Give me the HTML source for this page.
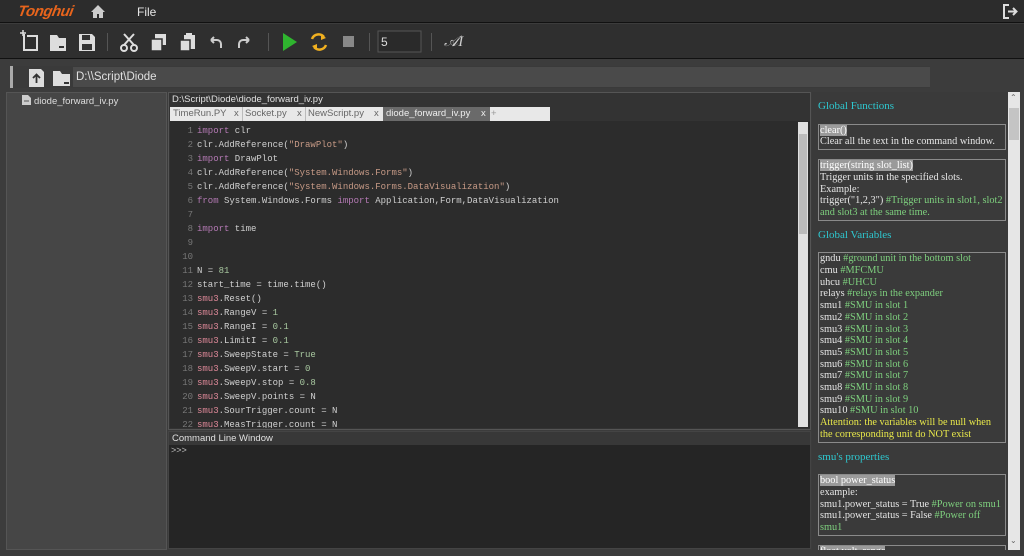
<!DOCTYPE html>
<html><head><meta charset="utf-8"><style>
*{margin:0;padding:0;box-sizing:border-box}
body{width:1024px;height:556px;background:#3c3c3c;font-family:"Liberation Sans",sans-serif;position:relative;overflow:hidden;color:#ddd}
.abs{position:absolute}
.code{font-family:"Liberation Mono",monospace;font-size:9px;line-height:14px;color:#d0d0d0;white-space:pre}
.ln{color:#777;display:inline-block;width:27px;text-align:right;padding-right:4px}
.k{color:#b57ab5}.s{color:#c79a86}.m{color:#e08a9a}.n{color:#a8c8a0}
.rp{font-family:"Liberation Serif",serif;font-size:10.3px;line-height:11.7px;color:#e6e6e6}
.h{color:#2ec8d0;font-size:11px;margin:7px 0 11px 6px}
.box{border:1px solid #8a8a8a;margin:0 2px 9px 6px;padding:0 1px 1px 1px}
.sel{background:#9a9a9a;color:#fff}
.g{color:#7ed07e}.y{color:#e8e84a}
.tab{position:absolute;top:108px;font-size:9.5px;color:#666}
</style></head><body>
<div class="abs" style="left:0;top:0;width:1024px;height:23px;background:#2c2c2c;border-bottom:1px solid #111"></div>
<div class="abs" style="left:18px;top:3px;font:italic bold 15px 'Liberation Sans';color:#e8641c;letter-spacing:-0.5px;transform:skewX(-10deg)">Tonghui</div>
<svg class="abs" style="left:90px;top:4px" width="16" height="15" viewBox="0 0 16 15"><path d="M8 1L1 8h2v6h4v-4h2v4h4V8h2z" fill="#ccc"/></svg>
<div class="abs" style="left:137px;top:5px;font-size:12px;color:#e6e6e6">File</div>
<svg class="abs" style="left:1002px;top:4px" width="16" height="15" viewBox="0 0 16 15"><path d="M7 1H2v13h5" fill="none" stroke="#ddd" stroke-width="2"/><path d="M6 7.5h8M11 4l3.5 3.5L11 11" fill="none" stroke="#ddd" stroke-width="2"/></svg>
<div class="abs" style="left:0;top:24px;width:1024px;height:35px;background:#2f2f2f;border-bottom:1px solid #111"></div>
<svg class="abs" style="left:18px;top:30px" width="450" height="24" viewBox="0 0 450 24">
<g fill="none" stroke="#ddd" stroke-width="2"><path d="M6 4v16h13V6H9"/><path d="M5 0v6M2 3h6" stroke-width="1.5"/></g>
<path d="M32 5h7l2 3h7v13H32z" fill="#ddd"/><rect x="41" y="16" width="5" height="2" fill="#333"/>
<path d="M61 4h13l3 3v14H61z" fill="#ddd"/><rect x="64" y="5" width="8" height="5" fill="#333"/><rect x="64" y="14" width="10" height="6" fill="#333"/>
<rect x="89" y="3" width="1" height="18" fill="#555"/>
<g stroke="#ddd" stroke-width="2" fill="none"><path d="M106 4l10 11M116 4l-10 11"/><circle cx="106" cy="18" r="3"/><circle cx="116" cy="18" r="3"/></g>
<rect x="137" y="4" width="11" height="11" fill="#ddd"/><rect x="133" y="9" width="11" height="12" fill="#ddd" stroke="#2f2f2f" stroke-width="1.5"/>
<rect x="166" y="5" width="11" height="14" fill="#ddd"/><rect x="162" y="10" width="10" height="11" fill="#ddd" stroke="#2f2f2f" stroke-width="1.5"/><rect x="168" y="3" width="6" height="3" fill="#ddd"/>
<path d="M193 10h6a4 4 0 0 1 4 4v4M193 10l3-3M193 10l3 3" stroke="#ccc" stroke-width="2" fill="none"/>
<path d="M231 10h-6a4 4 0 0 0-4 4v4M231 10l-3-3M231 10l-3 3" stroke="#ccc" stroke-width="2" fill="none"/>
<rect x="250" y="3" width="1" height="18" fill="#555"/>
<path d="M265 3l14 9-14 9z" fill="#2fb52f"/>
<g stroke="#f0b020" stroke-width="2.5" fill="none"><path d="M294 9a7 7 0 0 1 12-2"/><path d="M308 15a7 7 0 0 1-12 2"/></g><path d="M303 4l5 4-5 2z M299 20l-5-4 5-2z" fill="#f0b020"/>
<rect x="325" y="6" width="11" height="11" fill="#888"/>
<rect x="351" y="3" width="1" height="18" fill="#555"/>
<rect x="360" y="1" width="43" height="21" fill="#2a2a2a" stroke="#555"/>
<rect x="413" y="3" width="1" height="18" fill="#555"/>
</svg>
<div class="abs" style="left:381px;top:35px;font-size:12px;color:#ddd">5</div>
<div class="abs" style="left:444px;top:33px;font:italic 15px 'Liberation Serif';color:#ccc">𝒜I</div>
<div class="abs" style="left:10px;top:66px;width:920px;height:22px;background:#3a3a3a;border-left:3px solid #aaa"></div>
<div class="abs" style="left:73px;top:67px;width:857px;height:20px;background:#4a4a4a"></div>
<svg class="abs" style="left:28px;top:68px" width="45" height="19" viewBox="0 0 45 19"><path d="M1 1h12l3 3v15H1z" fill="#ddd"/><path d="M8.5 15V7M5 10l3.5-3.5L12 10" stroke="#333" stroke-width="1.8" fill="none"/><path d="M25 3h7l2 3h8v12H25z" fill="#ddd"/><rect x="36" y="14" width="5" height="2" fill="#333"/></svg>
<div class="abs" style="left:76px;top:71px;font-size:11.5px;color:#e0e0e0">D:\\Script\Diode</div>
<div class="abs" style="left:6px;top:92px;width:161px;height:458px;background:#464646;border:1px solid #555"></div>
<svg class="abs" style="left:22px;top:95px" width="9" height="10" viewBox="0 0 9 10"><path d="M0 0h6l3 3v7H0z" fill="#ccc"/><path d="M2 6h5" stroke="#555"/></svg>
<div class="abs" style="left:34px;top:96px;font-size:9.5px;color:#ddd">diode_forward_iv.py</div>
<div class="abs" style="left:168px;top:92px;width:643px;height:338px;background:#333;border:1px solid #555"></div>
<div class="abs" style="left:172px;top:94px;font-size:9.5px;color:#e0e0e0">D:\Script\Diode\diode_forward_iv.py</div>
<div class="abs" style="left:170px;top:107px;width:380px;height:14px;background:#e8e8e8"></div>
<div class="abs" style="left:383px;top:107px;width:107px;height:14px;background:#6a6a6a"></div>
<div class="tab" style="left:173px">TimeRun.PY</div><div class="tab" style="left:234px">x</div>
<div class="abs" style="left:242px;top:107px;width:1px;height:14px;background:#bbb"></div>
<div class="tab" style="left:245px">Socket.py</div><div class="tab" style="left:297px">x</div>
<div class="abs" style="left:305px;top:107px;width:1px;height:14px;background:#bbb"></div>
<div class="tab" style="left:308px">NewScript.py</div><div class="tab" style="left:374px">x</div>
<div class="tab" style="left:386px;color:#eee">diode_forward_iv.py</div><div class="tab" style="left:481px;color:#eee">x</div>
<div class="tab" style="left:491px;color:#999">+</div>
<div class="abs" style="left:170px;top:121px;width:640px;height:307px;background:#2c2c2c;overflow:hidden">
<div class="code" style="padding-top:3px"><span class="ln">1</span><span class="k">import</span> clr
<span class="ln">2</span>clr.AddReference(<span class="s">"DrawPlot"</span>)
<span class="ln">3</span><span class="k">import</span> DrawPlot
<span class="ln">4</span>clr.AddReference(<span class="s">"System.Windows.Forms"</span>)
<span class="ln">5</span>clr.AddReference(<span class="s">"System.Windows.Forms.DataVisualization"</span>)
<span class="ln">6</span><span class="k">from</span> System.Windows.Forms <span class="k">import</span> Application,Form,DataVisualization
<span class="ln">7</span>
<span class="ln">8</span><span class="k">import</span> time
<span class="ln">9</span>
<span class="ln">10</span>
<span class="ln">11</span>N = <span class="n">81</span>
<span class="ln">12</span>start_time = time.time()
<span class="ln">13</span><span class="m">smu3</span>.Reset()
<span class="ln">14</span><span class="m">smu3</span>.RangeV = <span class="n">1</span>
<span class="ln">15</span><span class="m">smu3</span>.RangeI = <span class="n">0.1</span>
<span class="ln">16</span><span class="m">smu3</span>.LimitI = <span class="n">0.1</span>
<span class="ln">17</span><span class="m">smu3</span>.SweepState = <span class="n">True</span>
<span class="ln">18</span><span class="m">smu3</span>.SweepV.start = <span class="n">0</span>
<span class="ln">19</span><span class="m">smu3</span>.SweepV.stop = <span class="n">0.8</span>
<span class="ln">20</span><span class="m">smu3</span>.SweepV.points = N
<span class="ln">21</span><span class="m">smu3</span>.SourTrigger.count = N
<span class="ln">22</span><span class="m">smu3</span>.MeasTrigger.count = N</div>
</div>
<div class="abs" style="left:798px;top:122px;width:10px;height:305px;background:#e0e0e0"></div>
<div class="abs" style="left:799px;top:134px;width:8px;height:100px;background:#bbb"></div>
<div class="abs" style="left:168px;top:431px;width:643px;height:118px;background:#252525;border:1px solid #444"></div>
<div class="abs" style="left:169px;top:432px;width:641px;height:13px;background:#383838"></div>
<div class="abs" style="left:172px;top:433px;font-size:9.5px;color:#e0e0e0">Command Line Window</div>
<div class="abs" style="left:171px;top:445px;font-size:9px;color:#bbb">&gt;&gt;&gt;</div>
<div class="abs" style="left:812px;top:92px;width:196px;height:458px;background:#3a3a3a;overflow:hidden">
<div class="rp">
<div class="h" style="margin-top:9px">Global Functions</div>
<div class="box"><span class="sel">clear()</span><br>Clear all the text in the command window.</div>
<div class="box"><span class="sel">trigger(string slot_list)</span><br>Trigger units in the specified slots.<br>Example:<br>trigger("1,2,3") <span class="g">#Trigger units in slot1, slot2 and slot3 at the same time.</span></div>
<div class="h">Global Variables</div>
<div class="box">gndu <span class="g">#ground unit in the bottom slot</span><br>cmu <span class="g">#MFCMU</span><br>uhcu <span class="g">#UHCU</span><br>relays <span class="g">#relays in the expander</span><br>smu1 <span class="g">#SMU in slot 1</span><br>smu2 <span class="g">#SMU in slot 2</span><br>smu3 <span class="g">#SMU in slot 3</span><br>smu4 <span class="g">#SMU in slot 4</span><br>smu5 <span class="g">#SMU in slot 5</span><br>smu6 <span class="g">#SMU in slot 6</span><br>smu7 <span class="g">#SMU in slot 7</span><br>smu8 <span class="g">#SMU in slot 8</span><br>smu9 <span class="g">#SMU in slot 9</span><br>smu10 <span class="g">#SMU in slot 10</span><br><span class="y">Attention: the variables will be null when the corresponding unit do NOT exist</span></div>
<div class="h">smu's properties</div>
<div class="box" style="white-space:nowrap;overflow:hidden"><span class="sel">bool power_status</span><br>example:<br>smu1.power_status = True <span class="g">#Power on smu1</span><br>smu1.power_status = False <span class="g">#Power off</span><br><span class="g">smu1</span></div>
<div class="box"><span class="sel">float volt_range</span><br>example</div>
</div></div>
<div class="abs" style="left:1008px;top:92px;width:12px;height:458px;background:#e6e6e6"></div>
<div class="abs" style="left:1009px;top:108px;width:10px;height:32px;background:#c4c4c4"></div>
<div class="abs" style="left:1010px;top:93px;font-size:8px;color:#666">⌃</div>
<div class="abs" style="left:1010px;top:536px;font-size:8px;color:#666">⌄</div>
</body></html>
